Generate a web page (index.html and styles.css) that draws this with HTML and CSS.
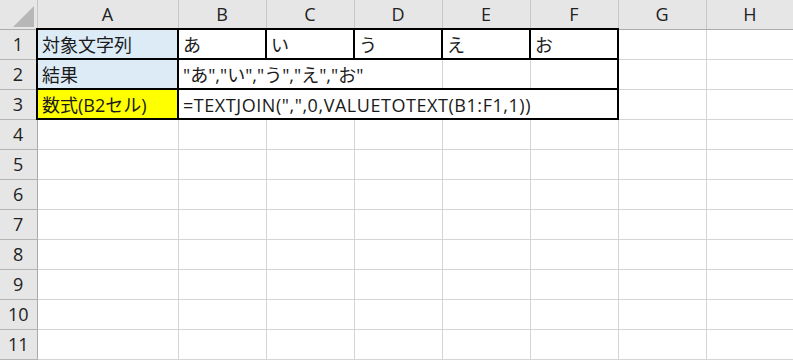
FILE: index.html
```html
<!DOCTYPE html>
<html>
<head>
    <meta charset="utf-8">
    <title>TEXTJOIN / VALUETOTEXT</title>
    <link rel="stylesheet" href="styles.css">
</head>
<body>
    <table class="sheet">
        <colgroup>
            <col class="col-head">
            <col class="col-a">
            <col class="col-std"><col class="col-std"><col class="col-std">
            <col class="col-std"><col class="col-std"><col class="col-std"><col class="col-std">
        </colgroup>
        <thead>
            <tr>
                <th class="corner">
                    <svg width="21" height="21" viewBox="0 0 21 21"><polygon points="0,21 21,21 21,0" fill="#b7b7b7"/></svg>
                </th>
                <th>A</th><th>B</th><th>C</th><th>D</th><th>E</th><th>F</th><th>G</th><th>H</th>
            </tr>
        </thead>
        <tbody>
            <tr>
                <th>1</th>
                <td class="label bk-all">対象文字列</td>
                <td class="bk-all">あ</td>
                <td class="bk-all">い</td>
                <td class="bk-all">う</td>
                <td class="bk-all">え</td>
                <td class="bk-all">お</td>
                <td></td><td></td>
            </tr>
            <tr>
                <th>2</th>
                <td class="label bk-all">結果</td>
                <td class="bk-tb spill">"あ","い","う","え","お"</td>
                <td class="bk-tb spill"></td>
                <td class="bk-tb"></td>
                <td class="bk-tb"></td>
                <td class="bk-tb bk-r"></td>
                <td></td><td></td>
            </tr>
            <tr>
                <th>3</th>
                <td class="formula-label bk-all">数式(B2セル)</td>
                <td class="bk-tb spill formula">=TEXTJOIN(",",0,VALUETOTEXT(B1:F1,1))</td>
                <td class="bk-tb spill"></td>
                <td class="bk-tb spill"></td>
                <td class="bk-tb spill"></td>
                <td class="bk-tb bk-r"></td>
                <td></td><td></td>
            </tr>
            <tr><th>4</th><td></td><td></td><td></td><td></td><td></td><td></td><td></td><td></td></tr>
            <tr><th>5</th><td></td><td></td><td></td><td></td><td></td><td></td><td></td><td></td></tr>
            <tr><th>6</th><td></td><td></td><td></td><td></td><td></td><td></td><td></td><td></td></tr>
            <tr><th>7</th><td></td><td></td><td></td><td></td><td></td><td></td><td></td><td></td></tr>
            <tr><th>8</th><td></td><td></td><td></td><td></td><td></td><td></td><td></td><td></td></tr>
            <tr><th>9</th><td></td><td></td><td></td><td></td><td></td><td></td><td></td><td></td></tr>
            <tr><th>10</th><td></td><td></td><td></td><td></td><td></td><td></td><td></td><td></td></tr>
            <tr><th>11</th><td></td><td></td><td></td><td></td><td></td><td></td><td></td><td></td></tr>
            <tr><th></th><td></td><td></td><td></td><td></td><td></td><td></td><td></td><td></td></tr>
        </tbody>
    </table>
</body>
</html>
```

FILE: styles.css
```css
body {
    margin: 0;
    overflow: hidden;
    background: #fff;
    font-family: "Open Sans", "Noto Sans CJK JP", sans-serif;
    font-size: 18px;
    color: #1a1a1a;
}
.sheet {
    border-collapse: collapse;
    table-layout: fixed;
    width: 794px;
}
.col-head { width: 37px; }
.col-a { width: 141px; }
.col-std { width: 88px; }

.sheet tr { height: 30px; }
.sheet thead tr { height: 29px; }

.sheet th,
.sheet td {
    padding: 0 4px;
    white-space: nowrap;
    overflow: visible;
    font-weight: normal;
    line-height: 20px;
    vertical-align: middle;
}
.sheet td {
    padding-top: 2px;
    border: 1px solid #d4d4d4;
    text-align: left;
}

/* column and row headers */
.sheet thead th {
    background: #e6e6e6;
    border-right: 1px solid #c6c6c6;
    border-bottom: 1px solid #ababab;
    text-align: center;
    color: #222;
}
.sheet tbody th {
    background: #e6e6e6;
    border-right: 1px solid #a9a9a9;
    border-bottom: 1px solid #b4b4b4;
    text-align: center;
    color: #222;
    padding: 0;
}
.sheet .corner {
    padding: 0 3px 2px 0;
    vertical-align: bottom;
}
.corner svg {
    display: block;
    margin-left: auto;
}

/* cell fills */
.label { background: #ddebf7; }
.formula-label { background: #ffff00; }
.formula { letter-spacing: 0.55px; }

/* black borders around the sample range */
.bk-all { border: 2px solid #000 !important; }
.bk-tb {
    border-top: 2px solid #000 !important;
    border-bottom: 2px solid #000 !important;
}
.bk-r { border-right: 2px solid #000 !important; }
.spill { border-right-style: hidden !important; }
```
